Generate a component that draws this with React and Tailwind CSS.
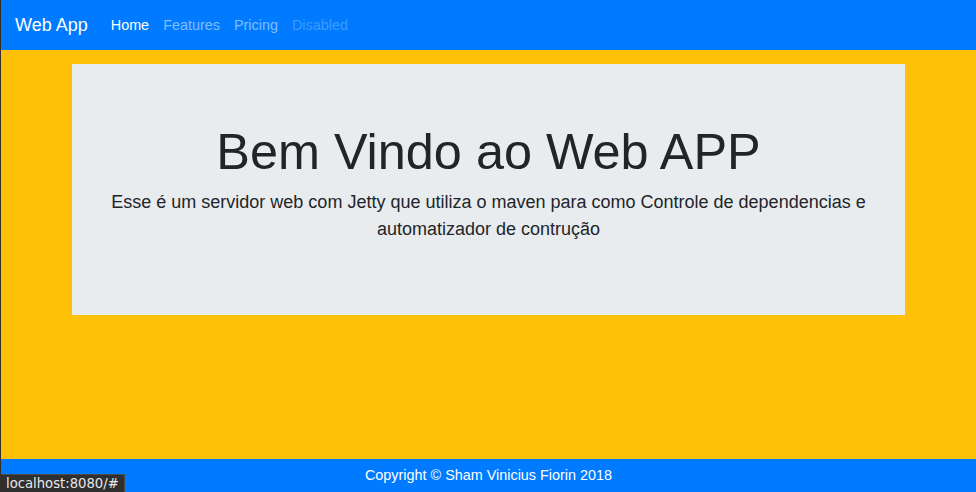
export default function App() {
    const links = [
        { label: 'Home', cls: 'text-white' },
        { label: 'Features', cls: 'text-white/50' },
        { label: 'Pricing', cls: 'text-white/50' },
        { label: 'Disabled', cls: 'text-white/25' },
    ]

    return (
        <div className="relative flex h-[492px] flex-col overflow-hidden border-l border-[#3a2f28] bg-[#ffc107] font-['Liberation_Sans',Arial,sans-serif] text-[#212529]">
            {/* Navbar */}
            <nav className="flex h-[50px] shrink-0 items-center bg-[#007bff] pl-[14px]">
                <a href="#" className="mr-[16px] text-[18px] leading-[27px] text-white">Web App</a>
                <ul className="flex items-center">
                    {links.map((l) => (
                        <li key={l.label}>
                            <a href="#" className={`block px-[7px] text-[14.4px] leading-[22px] ${l.cls}`}>{l.label}</a>
                        </li>
                    ))}
                </ul>
            </nav>

            {/* Main */}
            <main className="flex-1 px-[71px] pt-[14px]">
                <div className="bg-[#e9ecef] px-[29px] pb-[58px] pt-[58px] text-center">
                    <h1 className="mb-[7px] text-[50.4px] font-light leading-[60px]">Bem Vindo ao Web APP</h1>
                    <p className="mb-[14px] text-[18px] leading-[27px]">
                        Esse é um servidor web com Jetty que utiliza o maven para como Controle de dependencias e automatizador de contrução
                    </p>
                </div>
            </main>

            {/* Footer */}
            <footer className="flex h-[33px] shrink-0 items-center justify-center bg-[#007bff] text-[14.4px] text-white">
                Copyright © Sham Vinicius Fiorin 2018
            </footer>

            {/* Status bar link preview */}
            <div className="absolute bottom-0 left-0 flex h-[18px] items-center rounded-tr-[2px] border-r border-t border-[#4a4a4a] bg-[#2f2f2f] pl-[5px] pr-[5px] font-['DejaVu_Sans',sans-serif] text-[13.2px] text-[#e8e8e8]">
                localhost:8080/#
            </div>
        </div>
    )
}
